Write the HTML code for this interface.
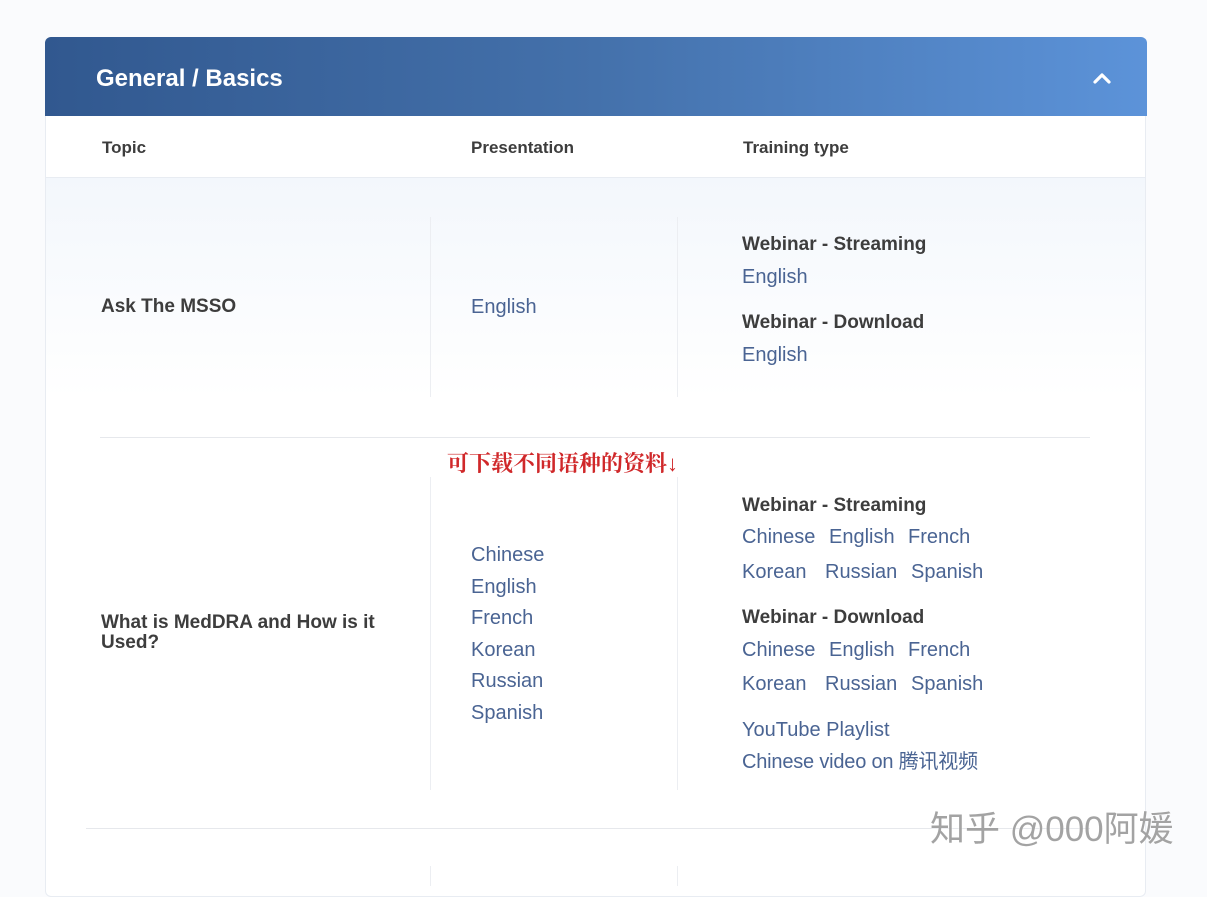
<!DOCTYPE html>
<html><head><meta charset="utf-8"><style>
*{margin:0;padding:0;box-sizing:border-box}
body{width:1207px;height:879px;background:#fafbfd;font-family:"Liberation Sans","Noto Sans CJK SC",sans-serif;position:relative;overflow:hidden}
.card{position:absolute;left:45px;top:37px;width:1101px;height:860px;background:#fff;border-radius:6px;border:1px solid #e8ecf2;overflow:hidden}
.hdr{position:absolute;left:45px;top:37px;width:1102px;height:79px;border-radius:6px 6px 0 0;background:linear-gradient(90deg,#31588f 0%,#4471ab 50%,#5c93d9 100%)}
.hdr h1{position:absolute;left:51px;top:29px;font-size:24px;color:#fff;font-weight:bold;line-height:26px}
.t{position:absolute;white-space:nowrap;line-height:20px}
.th{font-size:17px;font-weight:bold;color:#3d3d3d}
.b{font-size:19px;font-weight:bold;color:#3d3d3d}
.l{font-size:20px;color:#4a6493}
.vl{position:absolute;width:1px;background:#eceef2}
.hl{position:absolute;height:1px;background:#e6e8ec}
</style></head><body>
<div class="card"></div>
<div style="position:absolute;left:46px;top:178px;width:1099px;height:220px;background:linear-gradient(#f3f7fc,#ffffff)"></div>
<div class="hdr"><h1>General / Basics</h1>
<svg style="position:absolute;left:1047px;top:34px" width="20" height="14" viewBox="0 0 20 14"><path d="M3 11 L10 4 L17 11" stroke="#fff" stroke-width="3.2" fill="none" stroke-linecap="round" stroke-linejoin="round"/></svg></div>
<div class="hl" style="left:46px;top:177px;width:1099px;background:#e8ecf2"></div>
<div class="t th" style="left:102px;top:138px">Topic</div>
<div class="t th" style="left:471px;top:138px">Presentation</div>
<div class="t th" style="left:743px;top:138px">Training type</div>

<div class="vl" style="left:430px;top:217px;height:180px"></div>
<div class="vl" style="left:677px;top:217px;height:180px"></div>
<div class="t th" style="left:101px;top:297px;font-size:19px">Ask The MSSO</div>
<div class="t l" style="left:471px;top:297px">English</div>
<div class="t b" style="left:742px;top:235px">Webinar - Streaming</div>
<div class="t l" style="left:742px;top:267px">English</div>
<div class="t b" style="left:742px;top:313px">Webinar - Download</div>
<div class="t l" style="left:742px;top:345px">English</div>

<div class="hl" style="left:100px;top:437px;width:990px"></div>
<div class="t" style="left:447px;top:454px;font-size:22px;font-weight:bold;color:#d0282a;font-family:'Liberation Serif','Noto Serif CJK SC',serif">可下载不同语种的资料↓</div>

<div class="vl" style="left:430px;top:477px;height:313px"></div>
<div class="vl" style="left:677px;top:477px;height:313px"></div>
<div class="t th" style="left:101px;top:613px;font-size:19px;line-height:20px">What is MedDRA and How is it<br>Used?</div>
<div class="t l" style="left:471px;top:545px">Chinese</div>
<div class="t l" style="left:471px;top:577px">English</div>
<div class="t l" style="left:471px;top:608px">French</div>
<div class="t l" style="left:471px;top:640px">Korean</div>
<div class="t l" style="left:471px;top:671px">Russian</div>
<div class="t l" style="left:471px;top:703px">Spanish</div>

<div class="t b" style="left:742px;top:496px">Webinar - Streaming</div>
<div class="t l" style="left:742px;top:527px">Chinese</div>
<div class="t l" style="left:829px;top:527px">English</div>
<div class="t l" style="left:908px;top:527px">French</div>
<div class="t l" style="left:742px;top:562px">Korean</div>
<div class="t l" style="left:825px;top:562px">Russian</div>
<div class="t l" style="left:911px;top:562px">Spanish</div>
<div class="t b" style="left:742px;top:608px">Webinar - Download</div>
<div class="t l" style="left:742px;top:640px">Chinese</div>
<div class="t l" style="left:829px;top:640px">English</div>
<div class="t l" style="left:908px;top:640px">French</div>
<div class="t l" style="left:742px;top:674px">Korean</div>
<div class="t l" style="left:825px;top:674px">Russian</div>
<div class="t l" style="left:911px;top:674px">Spanish</div>
<div class="t l" style="left:742px;top:720px">YouTube Playlist</div>
<div class="t l" style="left:742px;top:752px;letter-spacing:-0.2px">Chinese video on 腾讯视频</div>

<div class="hl" style="left:86px;top:828px;width:1004px"></div>
<div class="vl" style="left:430px;top:866px;height:20px"></div>
<div class="vl" style="left:677px;top:866px;height:20px"></div>
<div class="t" style="left:930px;top:810px;font-size:35px;line-height:40px;color:rgba(140,140,140,0.8);text-shadow:0 0 2px #fff">知乎 @000阿媛</div>
</body></html>
